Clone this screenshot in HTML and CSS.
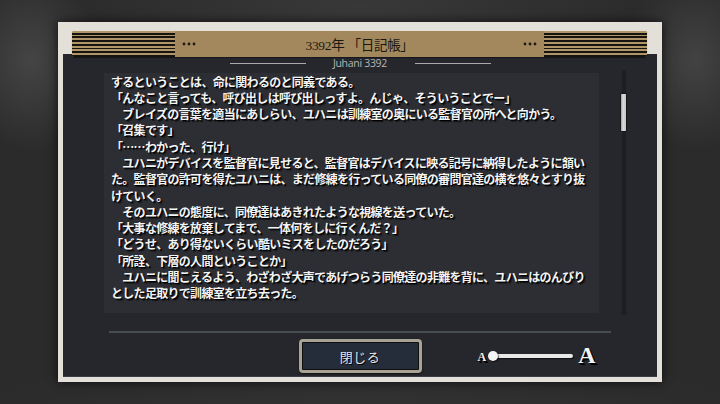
FILE: index.html
```html
<!DOCTYPE html>
<html lang="ja">
<head>
<meta charset="utf-8">
<title>日記帳</title>
<link rel="stylesheet" href="styles.css">
</head>
<body>
<div class="frame">
  <div class="header">
    <div class="stripes"></div>
    <svg class="dots" width="14" height="4" viewBox="0 0 14 4"><circle cx="2" cy="2" r="1.4"/><circle cx="7" cy="2" r="1.4"/><circle cx="12" cy="2" r="1.4"/></svg>
    <div class="title">3392年 「日記帳」</div>
    <svg class="dots" width="14" height="4" viewBox="0 0 14 4"><circle cx="2" cy="2" r="1.4"/><circle cx="7" cy="2" r="1.4"/><circle cx="12" cy="2" r="1.4"/></svg>
    <div class="stripes"></div>
  </div>
  <div class="panel">
    <div class="byline">
      <span class="rule"></span>
      <span class="name">Juhani 3392</span>
      <span class="rule"></span>
    </div>
    <div class="body">
      <div class="textbox">
        <p>するということは、命に関わるのと同義である。</p>
        <p>「んなこと言っても、呼び出しは呼び出しっすよ。んじゃ、そういうことでー」</p>
        <p>　ブレイズの言葉を適当にあしらい、ユハニは訓練室の奥にいる監督官の所へと向かう。</p>
        <p>「召集です」</p>
        <p>「……わかった、行け」</p>
        <p>　ユハニがデバイスを監督官に見せると、監督官はデバイスに映る記号に納得したように頷い<br>た。監督官の許可を得たユハニは、まだ修練を行っている同僚の審問官達の横を悠々とすり抜<br>けていく。</p>
        <p>　そのユハニの態度に、同僚達はあきれたような視線を送っていた。</p>
        <p>「大事な修練を放棄してまで、一体何をしに行くんだ？」</p>
        <p>「どうせ、あり得ないくらい酷いミスをしたのだろう」</p>
        <p>「所詮、下層の人間ということか」</p>
        <p>　ユハニに聞こえるよう、わざわざ大声であげつらう同僚達の非難を背に、ユハニはのんびり<br>とした足取りで訓練室を立ち去った。</p>
      </div>
      <div class="scroll"><div class="thumb"></div></div>
    </div>
    <div class="sep"></div>
    <div class="controls">
      <div></div>
      <button class="close">閉じる</button>
      <div class="sizer">
        <span class="a-small">A</span>
        <span class="track"><span class="knob"></span></span>
        <span class="a-large">A</span>
      </div>
    </div>
  </div>
</div>
</body>
</html>
```
FILE: styles.css
```css
html, body {
  margin: 0;
  padding: 0;
}
body {
  width: 720px;
  height: 404px;
  overflow: hidden;
  background:
    radial-gradient(ellipse 70px 90px at 30px 60px, rgba(90,90,90,0.55), rgba(90,90,90,0) 100%),
    radial-gradient(ellipse 70px 90px at 695px 60px, rgba(90,90,90,0.5), rgba(90,90,90,0) 100%),
    radial-gradient(ellipse 300px 60px at 360px 10px, rgba(70,70,70,0.5), rgba(70,70,70,0) 100%),
    radial-gradient(ellipse 400px 40px at 360px 400px, rgba(60,60,60,0.4), rgba(60,60,60,0) 100%),
    #2b2b2b;
  font-family: "Noto Sans CJK JP", sans-serif;
}
.frame {
  box-sizing: border-box;
  margin: 22px 0 0 58px;
  width: 604px;
  height: 360px;
  background: #e3dfd9;
  padding: 9px 5px 5px 5px;
  display: flex;
  flex-direction: column;
  box-shadow: 0 0 10px rgba(0,0,0,0.7);
}
.header {
  position: relative;
  z-index: 1;
  height: 26px;
  margin: 0 10px -3px 9px;
  background: #a3885d;
  border-radius: 2px;
  display: flex;
  align-items: center;
  overflow: hidden;
  box-shadow: 0 1px 1px rgba(0,0,0,0.4);
}
.stripes {
  width: 103px;
  height: 26px;
  background: repeating-linear-gradient(to bottom, #b09568 0px, #b09568 1.8px, #17140f 1.8px, #17140f 3.7px);
}
.dots {
  fill: #1d1a14;
  margin: 0 7px;
}
.title {
  flex: 1;
  text-align: center;
  font-family: "Liberation Serif", "Noto Sans CJK JP", serif;
  font-size: 13.5px;
  color: #1b1813;
  letter-spacing: -0.3px;
}
.panel {
  flex: 1;
  background: #26272c;
  display: flex;
  flex-direction: column;
  box-shadow: inset 0 -1px 0 #3a3d44;
}
.byline {
  margin-top: 3px;
  height: 12px;
  display: flex;
  align-items: center;
  justify-content: center;
}
.rule {
  width: 76px;
  height: 1px;
  background: #a9a9a9;
}
.name {
  width: 109px;
  text-align: center;
  font-family: "Open Sans", sans-serif;
  font-size: 10.5px;
  color: #b5b5b5;
  letter-spacing: -0.3px;
  line-height: 12px;
}
.body {
  margin-top: 4px;
  margin-left: 41px;
  display: flex;
  align-items: flex-start;
}
.textbox {
  box-sizing: border-box;
  width: 495px;
  height: 240px;
  background: #2d2e33;
  padding: 0.5px 0 0 7px;
  color: #f4f4f4;
  font-size: 12px;
  font-weight: 700;
  letter-spacing: -0.7px;
  line-height: 16.3px;
  white-space: nowrap;
  text-shadow: 1px 1px 0 #000, 2px 2px 1px rgba(0,0,0,0.6);
}
.textbox p {
  margin: 0;
}
.scroll {
  position: relative;
  margin: -3px 0 0 21px;
  width: 7px;
  height: 245px;
  display: flex;
  justify-content: center;
}
.scroll::before {
  content: "";
  width: 4px;
  height: 100%;
  background: #1d1e22;
}
.thumb {
  position: absolute;
  top: 23px;
  left: 0;
  box-sizing: border-box;
  width: 7px;
  height: 39px;
  border: 1px solid #16171a;
  border-radius: 1px;
  background: linear-gradient(to right, #9d9d9d, #dcdcdc 40%, #c4c4c4);
}
.sep {
  margin: 16px 46px 0 46px;
  height: 2px;
  background: #484d51;
}
.controls {
  margin-top: 6px;
  display: grid;
  grid-template-columns: 1fr auto 1fr;
  align-items: center;
}
.close {
  box-sizing: border-box;
  width: 123px;
  height: 34px;
  border: 3px solid #a8a392;
  border-radius: 4px;
  background: #262d3a;
  box-shadow: inset 0 0 0 1px #0d0f13, 0 1px 2px rgba(0,0,0,0.6);
  color: #e6e6e6;
  font-family: "Noto Sans CJK JP", sans-serif;
  font-size: 13px;
  letter-spacing: 0.5px;
  padding: 0;
  text-shadow: 1px 1px 0 #000;
}
.sizer {
  display: flex;
  align-items: center;
  padding-left: 56px;
}
.a-small, .a-large {
  font-family: "Liberation Serif", serif;
  font-weight: 700;
  color: #f2f2f2;
  text-shadow: 1px 1px 0 #000, 2px 2px 0 #000;
}
.a-small {
  font-size: 12px;
  margin-top: 2px;
}
.a-large {
  font-size: 24px;
  margin-left: 5px;
  margin-top: -2px;
}
.track {
  position: relative;
  margin-left: 3px;
  width: 84px;
  height: 4px;
  border-radius: 2px;
  background: #e8e8e8;
  box-shadow: 1px 1px 1px rgba(0,0,0,0.6);
}
.knob {
  position: absolute;
  left: -1px;
  top: -3px;
  width: 10px;
  height: 10px;
  border-radius: 50%;
  background: #f4f4f4;
  box-shadow: 1px 1px 1px rgba(0,0,0,0.6);
}
```
